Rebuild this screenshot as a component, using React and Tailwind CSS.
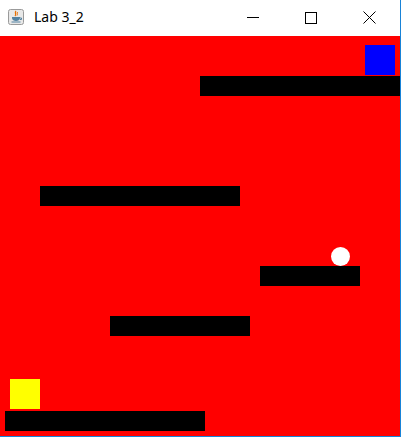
export default function App() {
  return (
    <div className="w-[401px] h-[437px] bg-white border-r border-b border-[#1883d7] flex flex-col overflow-hidden" style={{ fontFamily: '"Segoe UI", "Noto Sans", "Liberation Sans", sans-serif' }}>
      <div className="h-[36px] flex items-center shrink-0">
        <div className="ml-[8px] w-[16px] h-[16px] -mt-[2px]">
          <svg width="16" height="16" viewBox="0 0 16 16">
            <rect x="0.5" y="0.5" width="15" height="15" rx="2" fill="#e8e8e8" stroke="#9a9a9a" />
            <path d="M8 2 C6 4 9 5 7 7" stroke="#e76f00" strokeWidth="1.2" fill="none" />
            <path d="M9.5 3 C8.5 4.5 10 5 9 6.5" stroke="#e76f00" strokeWidth="1" fill="none" />
            <path d="M4 8 h8 v1 C12 11 10 12 8 12 C6 12 4 11 4 9 Z" fill="#5382a1" />
            <path d="M12 9 h1.5 v1.5 h-1.5" stroke="#5382a1" fill="none" />
            <rect x="3.5" y="12.5" width="9" height="1" fill="#5382a1" />
          </svg>
        </div>
        <span className="ml-[10px] text-[14px] text-black leading-none -mt-[3px]">Lab 3_2</span>
        <div className="ml-auto mr-[2px] flex h-full">
          <div className="w-[58px] h-full flex items-center justify-center">
            <div className="w-[12px] h-px bg-black -mt-[2px]" />
          </div>
          <div className="w-[58px] h-full flex items-center justify-center">
            <div className="w-[12px] h-[12px] border border-black -mt-[1px]" />
          </div>
          <div className="w-[58px] h-full flex items-center justify-center">
            <svg width="13" height="13" viewBox="0 0 13 13" className="-mt-[1px]">
              <path d="M0.5 0.5 L12.5 12.5 M12.5 0.5 L0.5 12.5" stroke="black" strokeWidth="1" />
            </svg>
          </div>
        </div>
      </div>
      <div className="relative w-[400px] h-[400px] bg-[#ff0000]">
        <div className="absolute left-[365px] top-[9px] w-[30px] h-[30px] bg-[#0000ff]" />
        <div className="absolute left-[200px] top-[40px] w-[200px] h-[20px] bg-black" />
        <div className="absolute left-[40px] top-[150px] w-[200px] h-[20px] bg-black" />
        <div className="absolute left-[331px] top-[211px] w-[19px] h-[19px] rounded-full bg-white" />
        <div className="absolute left-[260px] top-[230px] w-[100px] h-[20px] bg-black" />
        <div className="absolute left-[110px] top-[280px] w-[140px] h-[20px] bg-black" />
        <div className="absolute left-[10px] top-[343px] w-[30px] h-[30px] bg-[#ffff00]" />
        <div className="absolute left-[5px] top-[375px] w-[200px] h-[20px] bg-black" />
      </div>
    </div>
  );
}
